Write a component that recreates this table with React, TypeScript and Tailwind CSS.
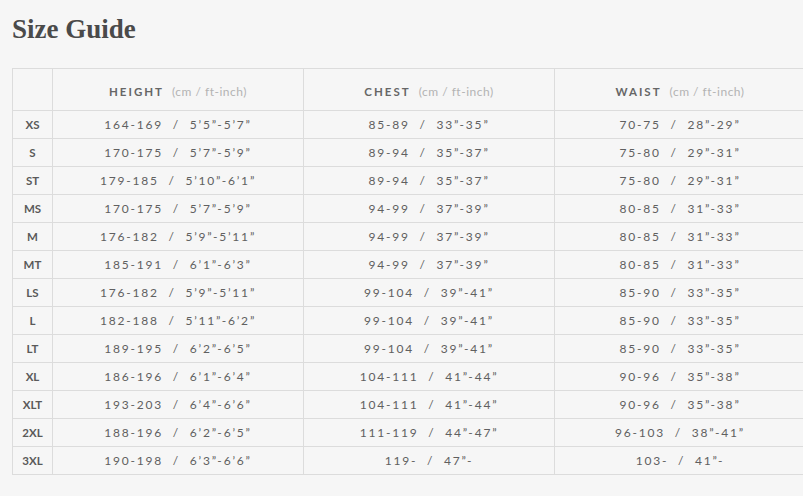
const rows: [string, string, string, string][] = [
  ["XS", "164-169  /  5’5”-5’7”", "85-89  /  33”-35”", "70-75  /  28”-29”"],
  ["S", "170-175  /  5’7”-5’9”", "89-94  /  35”-37”", "75-80  /  29”-31”"],
  ["ST", "179-185  /  5’10”-6’1”", "89-94  /  35”-37”", "75-80  /  29”-31”"],
  ["MS", "170-175  /  5’7”-5’9”", "94-99  /  37”-39”", "80-85  /  31”-33”"],
  ["M", "176-182  /  5’9”-5’11”", "94-99  /  37”-39”", "80-85  /  31”-33”"],
  ["MT", "185-191  /  6’1”-6’3”", "94-99  /  37”-39”", "80-85  /  31”-33”"],
  ["LS", "176-182  /  5’9”-5’11”", "99-104  /  39”-41”", "85-90  /  33”-35”"],
  ["L", "182-188  /  5’11”-6’2”", "99-104  /  39”-41”", "85-90  /  33”-35”"],
  ["LT", "189-195  /  6’2”-6’5”", "99-104  /  39”-41”", "85-90  /  33”-35”"],
  ["XL", "186-196  /  6’1”-6’4”", "104-111  /  41”-44”", "90-96  /  35”-38”"],
  ["XLT", "193-203  /  6’4”-6’6”", "104-111  /  41”-44”", "90-96  /  35”-38”"],
  ["2XL", "188-196  /  6’2”-6’5”", "111-119  /  44”-47”", "96-103  /  38”-41”"],
  ["3XL", "190-198  /  6’3”-6’6”", "119-  /  47”-", "103-  /  41”-"],
];

const headers = ["HEIGHT", "CHEST", "WAIST"];

export default function App() {
  return (
    <div className="min-h-screen w-[803px] overflow-hidden bg-[#f6f6f6] font-['Lato',sans-serif]">
      <h1 className="pl-3 pt-[13px] font-['Liberation_Serif',serif] text-[27px] font-bold leading-[32px] text-[#4a4a4a]">
        Size Guide
      </h1>
      <table className="mt-[23px] ml-3 w-[793px] table-fixed border-collapse">
        <colgroup>
          <col className="w-[40px]" />
          <col className="w-[251px]" />
          <col className="w-[251px]" />
          <col className="w-[251px]" />
        </colgroup>
        <thead>
          <tr className="h-[42px]">
            <th className="border border-[#dcdcdc]"></th>
            {headers.map((h) => (
              <th key={h} className="border border-[#dcdcdc] text-center font-normal">
                <span className="text-[11.5px] font-bold tracking-[2px] text-[#666]">{h}</span>
                <span className="ml-2 text-[12px] tracking-[0.5px] text-[#b3b3b3]">(cm / ft-inch)</span>
              </th>
            ))}
          </tr>
        </thead>
        <tbody>
          {rows.map((r) => (
            <tr key={r[0]} className="h-[28px]">
              <td className="border border-[#dcdcdc] text-center text-[11.5px] font-bold text-[#5a5a5a]">
                {r[0]}
              </td>
              {r.slice(1).map((v, i) => (
                <td
                  key={i}
                  className="whitespace-pre border border-[#dcdcdc] text-center text-[12px] tracking-[1.8px] text-[#606060]"
                >
                  {v}
                </td>
              ))}
            </tr>
          ))}
        </tbody>
      </table>
    </div>
  );
}
